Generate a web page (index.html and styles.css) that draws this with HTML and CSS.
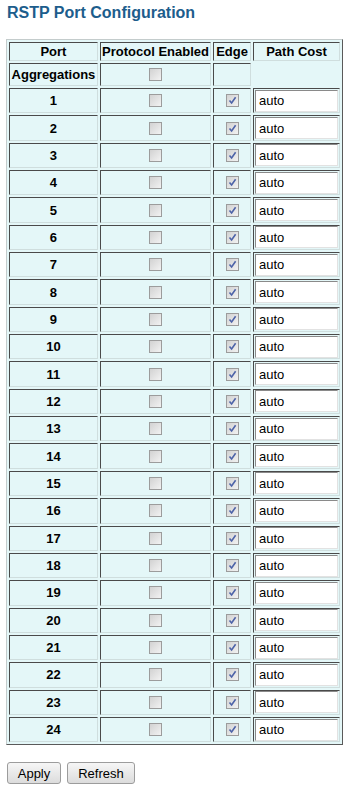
FILE: index.html
```html
<!DOCTYPE html>
<html lang="en">
<head>
  <meta charset="UTF-8">
  <meta name="viewport" content="width=device-width, initial-scale=1.0">
  <title>RSTP Port Configuration</title>
  <link rel="stylesheet" href="styles.css">
</head>
<body>

  <h1>RSTP Port Configuration</h1>

  <table id="rstp-table">
    <thead>
      <tr class="head-row">
        <th class="col-port">Port</th>
        <th class="col-proto">Protocol Enabled</th>
        <th class="col-edge">Edge</th>
        <th class="col-cost">Path Cost</th>
      </tr>
    </thead>
    <tbody id="rstp-body">
      <tr class="agg-row">
        <td class="port-name">Aggregations</td>
        <td><span class="cb"></span></td>
        <td></td>
        <td class="blank"></td>
      </tr>
    </tbody>
  </table>

  <div class="buttons">
    <button class="btn btn-apply">Apply</button>
    <button class="btn btn-refresh">Refresh</button>
  </div>

  <script>
    const checkMark = '<svg width="9" height="9" viewBox="0 0 9 9"><path d="M1.5 4.5 L3.6 7 L7.6 1.2" fill="none" stroke="#4d63a8" stroke-width="1.6"/></svg>';
    const body = document.getElementById("rstp-body");

    for (let port = 1; port <= 24; port++) {
      const row = document.createElement("tr");
      row.className = "port-row";
      row.innerHTML = `
        <td class="port-name">${port}</td>
        <td><span class="cb"></span></td>
        <td><span class="cb checked">${checkMark}</span></td>
        <td class="cost-cell"><input type="text" class="cost-input" value="auto"></td>
      `;
      body.appendChild(row);
    }
  </script>

</body>
</html>
```

FILE: styles.css
```css
body {
  font-family: "Liberation Sans", Arial, sans-serif;
  font-size: 13px;
  margin: 0;
  padding: 0 6px;
  background: #ffffff;
  color: #000;
}

h1 {
  font-size: 16px;
  font-weight: bold;
  color: #1d5d8c;
  margin: 4px 0 0 1px;
  line-height: 18px;
  height: 35px;
}

#rstp-table {
  border-collapse: separate;
  border-spacing: 2px;
  background-color: #e4f7f8;
  border: 1px solid;
  border-color: #c4cccc #5a5a5a #5a5a5a #c4cccc;
}

#rstp-table th,
#rstp-table td {
  box-sizing: border-box;
  padding: 0;
  text-align: center;
  vertical-align: middle;
  border: 1px solid;
  border-color: #4a4a4a #cfdede #cfdede #4a4a4a;
  background-color: #e4f7f8;
}

#rstp-table th {
  font-weight: bold;
  height: 19px;
  line-height: 15px;
}

.col-port { width: 89px; }
.col-proto { width: 113px; }
.col-edge { width: 38px; }
.col-cost { width: 87px; }

.agg-row td {
  height: 23px;
}

.port-row td {
  height: 25.35px;
}

.port-name {
  font-weight: bold;
}

#rstp-table td.blank {
  border-color: transparent;
}

.cb {
  display: inline-block;
  box-sizing: border-box;
  width: 13px;
  height: 13px;
  border: 1px solid #9c9c9c;
  background: linear-gradient(135deg, #d2d2d2 0%, #f2f2f2 100%);
  vertical-align: middle;
  position: relative;
  top: -1px;
}

.cb svg {
  display: block;
  margin: 1px 0 0 1px;
}

#rstp-table td.cost-cell {
  text-align: left;
}

.cost-input {
  box-sizing: border-box;
  width: 83px;
  height: 22px;
  margin: 0 0 0 1px;
  padding: 0 0 0 3px;
  font-family: "Liberation Sans", Arial, sans-serif;
  font-size: 13px;
  color: #000;
  background: #fff;
  border: 1px solid;
  border-color: #8a8a8a #e2e2e2 #e2e2e2 #8a8a8a;
  outline: none;
  vertical-align: middle;
}

.buttons {
  display: flex;
  gap: 6px;
  margin: 17px 0 0 1px;
}

.btn {
  box-sizing: border-box;
  height: 22px;
  padding: 0 9px;
  font-family: "Liberation Sans", Arial, sans-serif;
  font-size: 13px;
  color: #000;
  background: linear-gradient(#f6f6f6, #dcdcdc);
  border: 1px solid #9c9c9c;
  border-radius: 3px;
}

.btn-apply { width: 54px; }
.btn-refresh { width: 68px; }
```
